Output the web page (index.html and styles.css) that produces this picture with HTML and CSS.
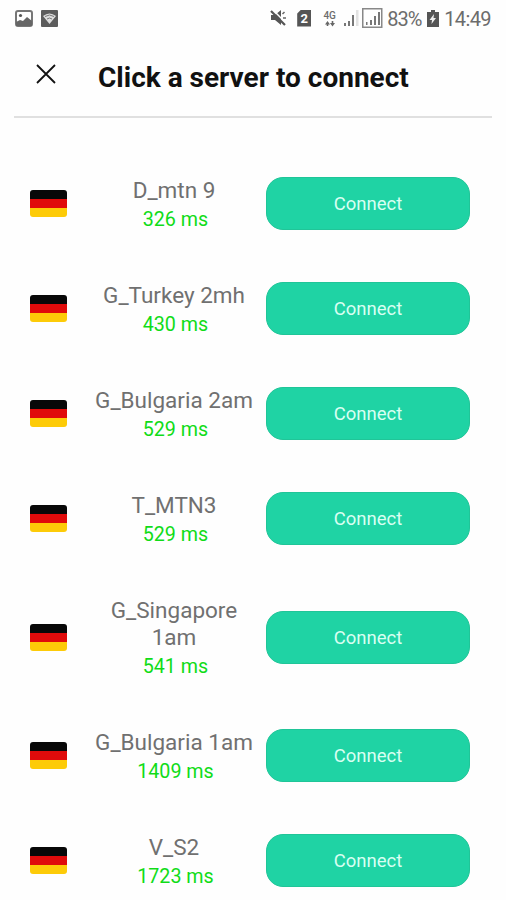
FILE: index.html
```
<!DOCTYPE html>
<html lang="en">
<head>
    <meta charset="UTF-8">
    <meta name="viewport" content="width=device-width, initial-scale=1.0">
    <title>Servers</title>
    <link rel="stylesheet" href="styles.css">
</head>
<body>
    <!-- Status bar -->
    <div class="status-bar">
        <div class="status-left">
            <svg width="18" height="17" viewBox="0 0 18 17">
                <rect x="1" y="1" width="16" height="15" rx="2" fill="#fff" stroke="#777" stroke-width="2"/>
                <circle cx="5.500" cy="5.500" r="1.600" fill="#555"/>
                <path d="M1 12l4-2 3 1 4-4 5 4v5H1z" fill="#666"/>
            </svg>
            <svg width="17" height="17" viewBox="0 0 17 17">
                <rect width="17" height="17" rx="1" fill="#5c5c5c"/>
                <path d="M2 6q6.500-5 13 0L8.500 14z" fill="#ddd"/>
                <path d="M4 6.500q4.500-3 9 0M6 9q2.500-2 5 0" fill="none" stroke="#777" stroke-width="1"/>
            </svg>
        </div>
        <div class="status-right">
            <svg class="mute" width="17" height="18" viewBox="0 0 17 18">
                <path d="M1 6h4l6-5v15l-6-5H1z" fill="#555"/>
                <path d="M2 0l15 15" stroke="#fff" stroke-width="1.500"/>
                <path d="M1 2l14 14" stroke="#555" stroke-width="2.200"/>
                <path d="M12.500 5l2-2M13 9h3" stroke="#666" stroke-width="1.500"/>
            </svg>
            <span class="sim">2</span>
            <span class="network">
                <span>4G</span>
                <svg width="10" height="6" viewBox="0 0 10 6">
                    <path d="M0 3.500L2.500 0 5 3.500H3.300V5H1.700V3.500zM5 2L7.500 5.500 10 2H8.300V0H6.700v2z" fill="#666"/>
                </svg>
            </span>
            <svg class="signal" width="17" height="18" viewBox="0 0 17 18">
                <path d="M1 14h2v3H1zM5 12h2v5H5zM9 6h2v11H9z" fill="#777"/>
                <path d="M13 1h2.500v16H13z" fill="#e2e2e2"/>
            </svg>
            <svg class="signal-box" width="21" height="20" viewBox="0 0 21 20">
                <rect x=".75" y=".75" width="19" height="18.500" fill="#fff" stroke="#888" stroke-width="1.500"/>
                <path d="M4 14h1.500v3H4zM8 12h2v5H8zM12 8h2v9h-2zM16 4h2v13h-2z" fill="#777"/>
            </svg>
            <span class="percent">83%</span>
            <svg class="battery" width="12" height="17" viewBox="0 0 12 17">
                <path d="M4 0h4v2h4v15H0V2h4z" fill="#555"/>
                <path d="M7 4l-4.500 6H5l-.5 4L9 8H6.500z" fill="#eee"/>
            </svg>
            <span class="clock">14:49</span>
        </div>
    </div>

    <header class="header">
        <svg class="close" width="20" height="20" viewBox="0 0 20 20">
            <path d="M1 1l18 18M19 1L1 19" stroke="#111" stroke-width="1.800"/>
        </svg>
        <h1>Click a server to connect</h1>
    </header>

    <!-- Server list -->
    <main class="servers">
        <div class="server">
            <div class="flag"></div>
            <div class="info">
                <div class="name">D_mtn 9</div>
                <div class="ping">326 ms</div>
            </div>
            <button type="button" class="connect">Connect</button>
        </div>
        <div class="server">
            <div class="flag"></div>
            <div class="info">
                <div class="name">G_Turkey 2mh</div>
                <div class="ping">430 ms</div>
            </div>
            <button type="button" class="connect">Connect</button>
        </div>
        <div class="server">
            <div class="flag"></div>
            <div class="info">
                <div class="name">G_Bulgaria 2am</div>
                <div class="ping">529 ms</div>
            </div>
            <button type="button" class="connect">Connect</button>
        </div>
        <div class="server">
            <div class="flag"></div>
            <div class="info">
                <div class="name">T_MTN3</div>
                <div class="ping">529 ms</div>
            </div>
            <button type="button" class="connect">Connect</button>
        </div>
        <div class="server">
            <div class="flag"></div>
            <div class="info">
                <div class="name">G_Singapore<br>1am</div>
                <div class="ping">541 ms</div>
            </div>
            <button type="button" class="connect">Connect</button>
        </div>
        <div class="server">
            <div class="flag"></div>
            <div class="info">
                <div class="name">G_Bulgaria 1am</div>
                <div class="ping">1409 ms</div>
            </div>
            <button type="button" class="connect">Connect</button>
        </div>
        <div class="server">
            <div class="flag"></div>
            <div class="info">
                <div class="name">V_S2</div>
                <div class="ping">1723 ms</div>
            </div>
            <button type="button" class="connect">Connect</button>
        </div>
    </main>
</body>
</html>
```

FILE: styles.css
```
* { box-sizing: border-box; }
body {
    margin: 0;
    height: 900px;
    overflow: hidden;
    background: #fefefe;
    font-family: Roboto, sans-serif;
}
svg { display: block; flex: none; }

/* Status bar */
.status-bar {
    display: flex;
    justify-content: space-between;
    height: 36px;
    padding: 0 15px;
    color: #6c6c6c;
}
.status-left, .status-right { display: flex; align-items: center; }
.status-left { gap: 8px; }
.sim {
    width: 14px;
    height: 17px;
    margin-left: 10px;
    background: #555;
    color: #fff;
    font-size: 13px;
    font-weight: 700;
    line-height: 17px;
    text-align: center;
    clip-path: polygon(4px 0, 100% 0, 100% 100%, 0 100%, 0 4px);
}
.network {
    display: flex;
    flex-direction: column;
    align-items: center;
    width: 15px;
    margin-left: 11px;
    font-size: 10px;
    font-weight: 500;
    line-height: 11px;
}
.signal { margin-left: 6px; }
.signal-box { margin-left: 2px; }
.percent { margin-left: 4px; width: 34px; padding-top: 1px; font-size: 20px; letter-spacing: -0.9px; white-space: nowrap; }
.battery { margin: 0 5px 0 6px; }
.clock { padding-top: 1px; font-size: 20px; letter-spacing: -0.6px; }

/* Title */
.header {
    display: flex;
    align-items: center;
    height: 82px;
    margin: 0 14px;
    padding: 0 0 4px 22px;
    border-bottom: 2px solid #e0e0e0;
}
.header h1 {
    margin: 7px 0 0 42px;
    color: #111;
    font-size: 28px;
    font-weight: 700;
    line-height: 32px;
    white-space: nowrap;
}

/* Servers */
.servers { padding-top: 33px; }
.server {
    display: flex;
    align-items: center;
    padding: 26px 36px 24px 30px;
}
.flag {
    flex: none;
    width: 37px;
    height: 27px;
    margin-bottom: 2px;
    border-radius: 3px;
    background: linear-gradient(#080808 33.3%, #e00b0b 33.3% 66.6%, #fdcb08 66.6%);
}
.info {
    width: 168px;
    margin: 0 8px 0 23px;
    text-align: center;
    white-space: nowrap;
}
.name { color: #707070; font-size: 22.5px; line-height: 27px; }
.ping { margin-top: 3px; padding-left: 3px; color: #10dc18; font-size: 19.7px; line-height: 25px; }
.connect {
    width: 204px;
    height: 53px;
    margin-bottom: 2px;
    padding: 1px 0 0;
    border: 1px solid #20c598;
    border-radius: 17px;
    background: #1fd3a4;
    color: #d8fff2;
    font-family: inherit;
    font-size: 18.5px;
    cursor: pointer;
}
```
